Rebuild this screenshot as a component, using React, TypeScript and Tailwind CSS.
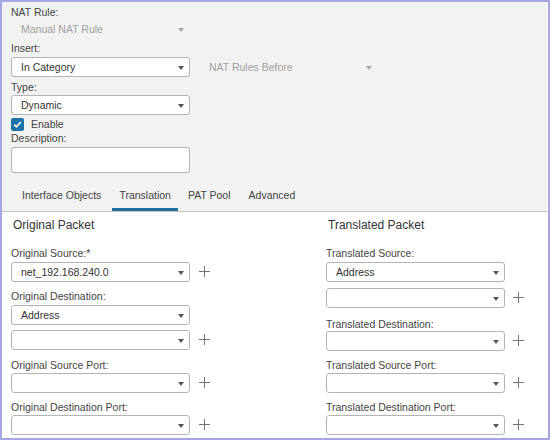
import React from 'react';

const font = { fontFamily: '"Liberation Sans", Arial, sans-serif' };

const Arrow: React.FC<{ muted?: boolean }> = ({ muted }) => (
  <span
    className={`mt-[1px] h-0 w-0 border-x-[3px] border-t-[4px] border-x-transparent ${
      muted ? 'border-t-[#a8a8a8]' : 'border-t-[#555]'
    }`}
  ></span>
);

const Select: React.FC<{ value?: string; disabled?: boolean }> = ({ value = '', disabled }) => (
  <div
    className={`flex h-[20px] w-[179px] items-center justify-between rounded-[3px] pl-[9px] pr-[5px] text-[10.5px] ${
      disabled ? 'border border-transparent text-[#a0a0a0]' : 'border border-[#b4b4b4] bg-white text-[#333]'
    }`}
  >
    <span className="leading-[13px]">{value}</span>
    <Arrow muted={disabled} />
  </div>
);

const Plus: React.FC = () => (
  <svg width="11" height="11" viewBox="0 0 11 11" className="-mt-[2px]">
    <path d="M5.5 0v11M0 5.5h11" stroke="#757575" strokeWidth="1" />
  </svg>
);

const Label: React.FC<{ children: React.ReactNode; className?: string }> = ({ children, className = '' }) => (
  <div className={`text-[10.5px] leading-[13px] text-[#444] ${className}`}>{children}</div>
);

const Row: React.FC<{ value?: string; plus?: boolean; gap: string; className?: string }> = ({
  value,
  plus,
  gap,
  className = '',
}) => (
  <div className={`flex items-center ${className}`}>
    <Select value={value} />
    {plus && <div className={gap}><Plus /></div>}
  </div>
);

const App: React.FC = () => {
  const tabs = [
    { name: 'Interface Objects', cls: 'ml-0' },
    { name: 'Translation', cls: 'ml-[4px]', active: true },
    { name: 'PAT Pool', cls: 'ml-[3px]' },
    { name: 'Advanced', cls: 'ml-[4px]' },
  ];

  return (
    <div style={font} className="h-[440px] w-[550px] border-2 border-[#a6a6e2] bg-white">
      <div className="h-full border-r border-white">
        {/* Rule header */}
        <div className="border-b border-[#c4c4c4] bg-[#f2f2f2] pl-[9px]">
          <Label className="pt-[4px]">NAT Rule:</Label>
          <Select value="Manual NAT Rule" disabled />
          <Label className="mt-[3px]">Insert:</Label>
          <div className="mt-[2px] flex gap-[9px]">
            <Select value="In Category" />
            <Select value="NAT Rules Before" disabled />
          </div>
          <Label className="mt-[4px]">Type:</Label>
          <div className="mt-[1px]">
            <Select value="Dynamic" />
          </div>
          <div className="mt-[3px] flex h-[13px] items-center gap-[7px]">
            <span className="flex h-[13px] w-[13px] items-center justify-center rounded-[2px] bg-[#1d72a7]">
              <svg width="9" height="9" viewBox="0 0 9 9">
                <path d="M1.2 4.6l2.2 2.2L7.8 2" fill="none" stroke="white" strokeWidth="1.6" />
              </svg>
            </span>
            <span className="text-[10.5px] text-[#444]">Enable</span>
          </div>
          <Label className="mt-[1px]">Description:</Label>
          <div className="mt-[2px] h-[26px] w-[179px] rounded-[3px] border border-[#b4b4b4] bg-white"></div>

          {/* Tabs */}
          <div className="mt-[9px] ml-[4px] flex">
            {tabs.map((t) => (
              <div
                key={t.name}
                className={`flex h-[29px] items-center border-b-[3px] px-[7px] pt-[2px] text-[10.5px] text-[#444] ${t.cls} ${
                  t.active ? 'border-[#1f6f9b]' : 'border-transparent'
                }`}
              >
                {t.name}
              </div>
            ))}
          </div>
        </div>

        {/* Translation panel */}
        <div className="grid grid-cols-[315px_1fr] pl-[9px]">
          <div className="flex flex-col">
            <div className="mt-[6px] pl-[2px] text-[12px] leading-[14px] text-[#333]">Original Packet</div>
            <Label className="mt-[15px]">Original Source:*</Label>
            <Row className="mt-[2px]" value="net_192.168.240.0" plus gap="ml-[9px]" />
            <Label className="mt-[8px]">Original Destination:</Label>
            <Row className="mt-[2px]" value="Address" gap="ml-[9px]" />
            <Row className="mt-[5px]" plus gap="ml-[9px]" />
            <Label className="mt-[9px]">Original Source Port:</Label>
            <Row className="mt-[1px]" plus gap="ml-[9px]" />
            <Label className="mt-[8px]">Original Destination Port:</Label>
            <Row className="mt-[1px]" plus gap="ml-[9px]" />
          </div>
          <div className="flex flex-col">
            <div className="mt-[6px] pl-[2px] text-[12px] leading-[14px] text-[#333]">Translated Packet</div>
            <Label className="mt-[15px]">Translated Source:</Label>
            <Row className="mt-[2px]" value="Address" gap="ml-[8px]" />
            <Row className="mt-[6px]" plus gap="ml-[8px]" />
            <Label className="mt-[10px]">Translated Destination:</Label>
            <Row plus gap="ml-[8px]" />
            <Label className="mt-[8px]">Translated Source Port:</Label>
            <Row className="mt-[1px]" plus gap="ml-[8px]" />
            <Label className="mt-[8px]">Translated Destination Port:</Label>
            <Row className="mt-[1px]" plus gap="ml-[8px]" />
          </div>
        </div>
      </div>
    </div>
  );
};

export default App;
